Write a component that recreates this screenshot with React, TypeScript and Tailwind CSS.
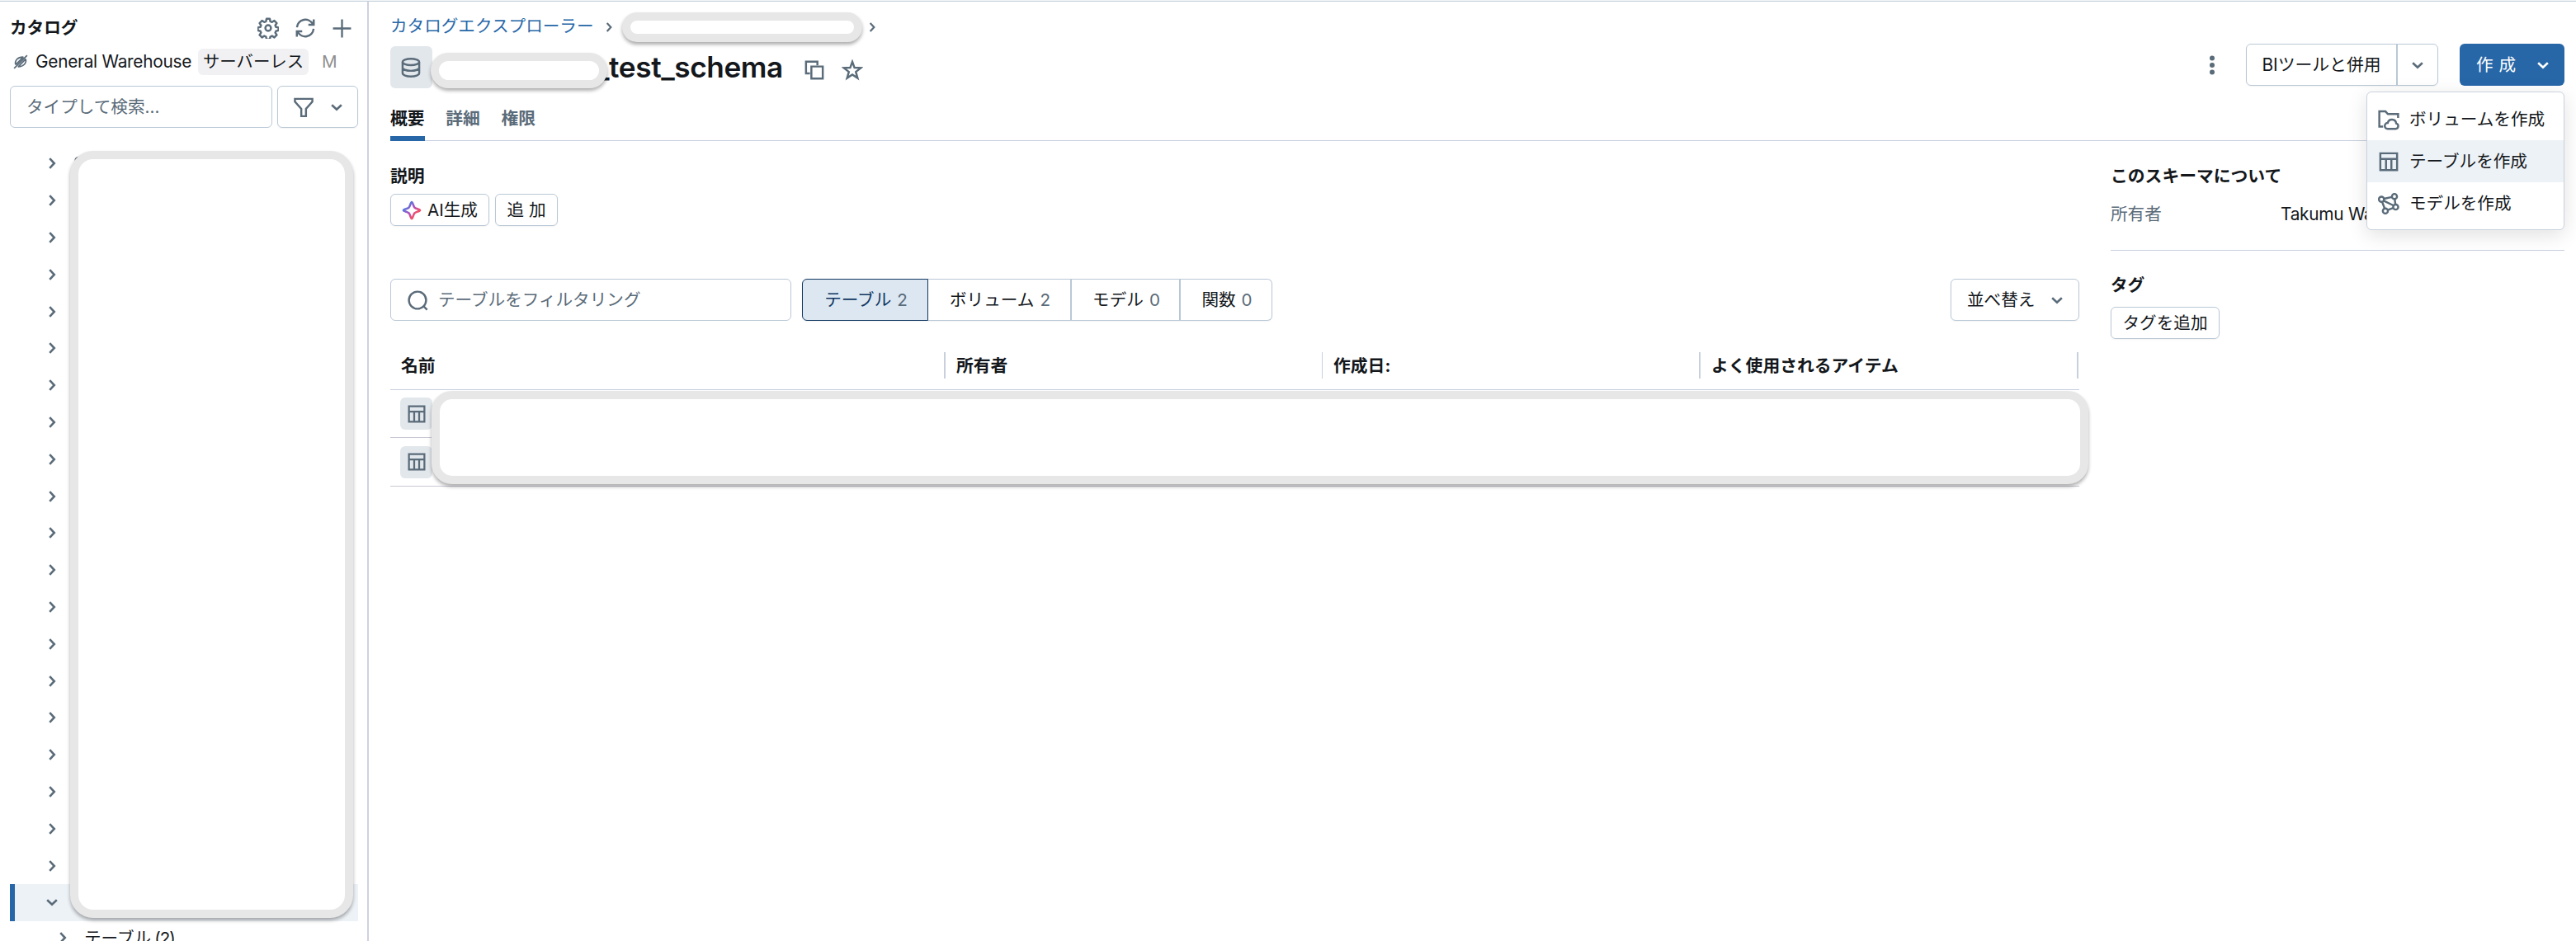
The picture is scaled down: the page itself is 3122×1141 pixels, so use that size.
import React from 'react';

type IconProps = { className?: string; size?: number };

function Svg({ size = 26, className = '', children }: IconProps & { children: React.ReactNode }) {
  return (
    <svg width={size} height={size} viewBox="0 0 16 16" fill="none" stroke="currentColor" strokeWidth="1.5" className={`block shrink-0 ${className}`}>
      {children}
    </svg>
  );
}

const ChevronDown = (p: IconProps) => <Svg {...p}><path strokeWidth="1.6" d="M4.4 6.3 8 9.7l3.6-3.4" /></Svg>;
const ChevronRight = (p: IconProps) => <Svg {...p}><path strokeWidth="1.6" d="M6.3 4.4 9.7 8l-3.4 3.6" /></Svg>;
const Plus = (p: IconProps) => <Svg {...p}><path d="M8 1v14M1 8h14" /></Svg>;
const Funnel = (p: IconProps) => <Svg {...p}><path d="M1.5 1.75h13v2.1L9.75 9.2v5.5h-3.5V9.2L1.5 3.85z" /></Svg>;
const Search = (p: IconProps) => <Svg {...p}><circle cx="8" cy="8" r="6.4" /><path d="m12.3 12.3 2.9 2.9" /></Svg>;
const Star = (p: IconProps) => <Svg {...p}><path d="m8 1.8 1.6 4.4 4.7.2-3.7 2.9 1.3 4.6L8 11.3l-3.9 2.6 1.3-4.6L1.7 6.4l4.7-.2z" /></Svg>;
const Copy = (p: IconProps) => <Svg {...p}><path d="M4.7 10.5H1.75v-8.8h8.5v2.8" /><path d="M5.75 5.3h8.5v9h-8.5z" /></Svg>;
const Database = (p: IconProps) => (
  <Svg {...p}><ellipse cx="8" cy="3.8" rx="6.2" ry="2.4" /><path d="M1.8 3.8v8.4c0 1.3 2.8 2.4 6.2 2.4s6.2-1.1 6.2-2.4V3.8M1.8 8c0 1.3 2.8 2.4 6.2 2.4s6.2-1.1 6.2-2.4" /></Svg>
);
const Table = (p: IconProps) => <Svg {...p}><path d="M1.75 1.75h12.5v12.5H1.75zM1.75 6h12.5M6 6v8.2M10 6v8.2" /></Svg>;
const Refresh = (p: IconProps) => (
  <Svg {...p}><path d="M1.8 7.4A6.3 6.3 0 0 1 13.6 5M14.2 8.6A6.3 6.3 0 0 1 2.4 11" /><path d="M14.3 1.5v4h-4M1.7 14.5v-4h4" /></Svg>
);
const Gear = (p: IconProps) => (
  <Svg {...p}>
    <circle cx="8" cy="8" r="2.1" />
    <path strokeLinejoin="round" d="M6.8 1.1h2.4l.4 1.9 1.3.6 1.7-1.1 1.8 1.8-1.1 1.7.5 1.2 1.9.4v2.2l-1.9.5-.5 1.2 1.1 1.7-1.8 1.8-1.7-1.1-1.3.6-.4 1.9H6.8l-.4-1.9-1.3-.6L3.4 15l-1.8-1.8 1.1-1.7-.5-1.2-1.9-.5V7.6l1.9-.4.5-1.2-1.1-1.7 1.8-1.8 1.7 1.1 1.3-.6z" />
  </Svg>
);
const Volume = (p: IconProps) => (
  <Svg {...p}><path d="M3.8 13.25H1V1.9h4.6l1.8 2H15v2.8" /><path d="M7.2 14.9h6a2.1 2.1 0 0 0 .4-4.1 3.2 3.2 0 0 0-6.3-.3 2.2 2.2 0 0 0-.1 4.4z" /></Svg>
);
const Model = (p: IconProps) => (
  <Svg {...p}>
    <circle cx="2.6" cy="4.7" r="1.9" /><circle cx="12.3" cy="2.6" r="1.9" /><circle cx="13.2" cy="10.5" r="1.9" /><circle cx="5.5" cy="13.4" r="1.9" />
    <path d="m4.5 4.3 5.9-1.3M4.2 5.8l7.5 3.6M3.1 6.6l1.9 4.9M12.5 4.5l.5 4.1M7.3 12.7l4.1-1.5" />
  </Svg>
);
const Unplugged = (p: IconProps) => (
  <Svg {...p}><path d="M1 15 15 1M2.6 11C1.3 7 4.5 2.6 11 2.8M13.4 5c1.3 4-1.9 8.400-8.400 8.200M5.500 13.200 13.400 5M2.600 11 11 2.800" /></Svg>
);
function Sparkle() {
  return (
    <svg width="26" height="26" viewBox="0 0 16 16" fill="none" className="block shrink-0">
      <defs>
        <linearGradient id="ai" x1="2" y1="3" x2="13" y2="13" gradientUnits="userSpaceOnUse">
          <stop offset="0.15" stopColor="#4a7fe0" />
          <stop offset="0.5" stopColor="#b04fc4" />
          <stop offset="0.8" stopColor="#f0506a" />
        </linearGradient>
      </defs>
      <path stroke="url(#ai)" strokeWidth="1.6" strokeLinejoin="round" d="M8 1.8c.8 0 1 2.9 2.1 4.1s4.1 1.3 4.1 2.1-3 .9-4.1 2.1-1.3 4.1-2.1 4.1-1-2.9-2.1-4.1S1.800 8.800 1.800 8s3-.9 4.100-2.100S7.200 1.800 8 1.800z" />
    </svg>
  );
}

// Covers private names; always sits over the content below it
function Redaction({ className }: { className: string }) {
  return <div className={`absolute z-10 border-[10px] border-[#e7e7e7] bg-white shadow-[0_3px_4px_rgba(0,0,0,0.32)] ${className}`} />;
}

const treeRows = Array.from({ length: 20 }, (_, i) => i);

function Sidebar() {
  return (
    <aside className="relative flex h-full w-[447px] shrink-0 flex-col border-r-2 border-[#cfd2e0] pl-3 pr-[11px]">
      <div className="mt-[13px] flex h-[38px] shrink-0 items-center">
        <h2 className="flex-1 font-bold">カタログ</h2>
        <div className="flex items-center gap-[19px] pr-[7px] text-[#5a6b79]">
          <Gear />
          <Refresh />
          <Plus size={25} />
        </div>
      </div>
      <div className="mt-1.5 flex h-8 shrink-0 items-center">
        <Unplugged size={18} className="ml-1 mr-[9px] text-[#5a6b79]" />
        <span className="w-[197px] whitespace-nowrap text-[20.8px] tracking-[-0.25px]">General Warehouse</span>
        <span className="flex h-8 w-[134px] items-center justify-center rounded-md bg-[#f1f1f4] text-[20.4px]">サーバーレス</span>
        <span className="ml-4 text-[#8f8f8f]">M</span>
      </div>
      <div className="mt-[13px] flex h-[51px] shrink-0 gap-1.5">
        <div className="flex w-[318px] items-center rounded-md border border-[#b9c8d6] pl-[19px] text-[#5a6b79]">タイプして検索...</div>
        <div className="flex flex-1 items-center justify-between rounded-md border border-[#b9c8d6] pl-[18px] pr-3 text-[#5a6b79] shadow-xs">
          <Funnel />
          <ChevronDown />
        </div>
      </div>
      <div className="mt-[21px] flex shrink-0 flex-col text-[#5a6b79]">
        {treeRows.map((row) => (
          <div key={row} className="flex h-[44.8px] items-center pl-[38px]">
            <ChevronRight />
            {row === 0 && <Database size={24} className="ml-[13px] mt-1" />}
          </div>
        ))}
        <div className="flex h-[44.8px] items-center border-l-[6px] border-[#2767a8] bg-[#edf2f7] pl-8">
          <ChevronDown />
        </div>
        <div className="flex h-[44.8px] items-center pl-[51px]">
          <ChevronRight className="-mt-1" />
          <span className="-mt-0.5 ml-[13px] text-[#14181c]">テーブル<span className="ml-1 tracking-[-1px]">(2)</span></span>
        </div>
      </div>
      <Redaction className="left-[85px] top-[181px] h-[930px] w-[343px] rounded-[28px]" />
    </aside>
  );
}

const menuItems = [
  { label: 'ボリュームを作成', Icon: Volume },
  { label: 'テーブルを作成', Icon: Table },
  { label: 'モデルを作成', Icon: Model },
];

function CreateMenu() {
  return (
    <div className="absolute right-0 top-[58px] z-20 flex h-[168px] w-[240px] flex-col rounded-md border border-[#c9d2de] bg-white pt-[7px] shadow-[0_6px_24px_rgba(0,0,0,0.12)]">
      {menuItems.map(({ label, Icon }, i) => (
        <div key={label} className={`flex h-[51px] items-center whitespace-nowrap pl-[13px] ${i === 1 ? 'bg-[#edf2f7]' : ''}`}>
          <Icon className="mr-3 text-[#5a6b79]" />
          {label}
        </div>
      ))}
    </div>
  );
}

function Header() {
  return (
    <header className="flex h-[169px] justify-between border-b border-[#c8d0de]">
      <div className="flex flex-col">
        <div className="relative flex h-[32px] items-center pt-[27px] text-[#2767a8]">
          カタログエクスプローラー
          <ChevronRight size={22} className="ml-[7px] mt-0.5 text-[#5a6b79]" />
          <ChevronRight size={22} className="ml-[297px] mt-0.5 text-[#5a6b79]" />
          <Redaction className="left-[281px] top-[13px] h-9 w-[291px] rounded-[18px]" />
        </div>
        <div className="relative mt-[22px] flex h-[51px] items-center">
          <div className="flex h-[51px] w-[51px] items-center justify-center rounded-md bg-[#e2e7ec] text-[#5a6b79]">
            <Database className="mr-0.5" />
          </div>
          <h1 className="-mt-px ml-[198px] text-[35.2px] font-semibold tracking-[-0.4px]">_test_schema</h1>
          <Copy className="ml-[25px] mt-1.5 text-[#5a6b79]" />
          <Star className="ml-5 mt-1.5 text-[#5a6b79]" />
          <Redaction className="left-[49px] top-2 h-[43px] w-[214px] rounded-[22px]" />
        </div>
        <nav className="mt-[19px] flex gap-[25.6px] text-[20.8px] font-bold text-[#5a6b79]">
          <span className="h-[45px] border-b-[6px] border-[#2767a8] pt-0.5 text-[#14181c]">概要</span>
          <span className="pt-0.5">詳細</span>
          <span className="pt-0.5">権限</span>
        </nav>
      </div>
      <div className="relative mt-[51px] flex h-[51px] items-center">
        <svg width="8" height="26" viewBox="0 0 8 26" fill="#5a6b79" className="mr-[37px]">
          <circle cx="4" cy="4.5" r="3" /><circle cx="4" cy="13" r="3" /><circle cx="4" cy="21.5" r="3" />
        </svg>
        <div className="flex h-[51px] w-[233px] rounded-md border border-[#b9c8d6] shadow-xs">
          <span className="flex w-[183px] items-center justify-center border-r-2 border-[#b9c8d6] text-[20.8px]">BIツールと併用</span>
          <span className="flex flex-1 items-center justify-center text-[#5a6b79]"><ChevronDown /></span>
        </div>
        <div className="ml-[26px] flex h-[51px] w-[127px] items-center rounded-md bg-[#2767a8] pl-5 text-white">
          <span className="flex gap-[7px]"><span>作</span><span>成</span></span>
          <ChevronDown className="ml-5" />
        </div>
        <CreateMenu />
      </div>
    </header>
  );
}

const segments = [
  { label: 'テーブル', count: 2, style: 'w-[153px] rounded-l-md border border-[#10365f] bg-[#dce7f2] text-[#10365f] pl-0.5' },
  { label: 'ボリューム', count: 2, style: 'w-[174px] border-y border-r-2 border-[#b9c8d6] pl-0.5' },
  { label: 'モデル', count: 0, style: 'w-[132px] border-y border-r-2 border-[#b9c8d6] pl-0.5' },
  { label: '関数', count: 0, style: 'w-[111px] rounded-r-md border-y border-r border-[#b9c8d6] pl-0.5' },
];

const columns = [
  { label: '名前', style: 'w-[673px] border-r-2' },
  { label: '所有者', style: 'w-[457px] border-r' },
  { label: '作成日:', style: 'w-[458px] border-r-2' },
  { label: 'よく使用されるアイテム', style: 'w-[458px] border-r-2' },
];

function Overview() {
  return (
    <section className="flex w-[2047px] flex-col">
      <h3 className="mt-[27px] text-[20.8px] font-bold">説明</h3>
      <div className="mt-[5px] flex h-[39px] gap-[7px]">
        <div className="flex w-[120px] items-center whitespace-nowrap rounded-md border border-[#b9c8d6] pl-3 shadow-xs">
          <Sparkle />
          <span className="ml-1.5">AI生成</span>
        </div>
        <div className="flex w-[76px] items-center justify-center gap-[6px] rounded-md border border-[#b9c8d6] shadow-xs">
          <span>追</span><span>加</span>
        </div>
      </div>
      <div className="mt-16 flex h-[51px]">
        <div className="flex w-[486px] items-center rounded-md border border-[#b9c8d6] pl-[19px] text-[#5a6b79]">
          <Search />
          <span className="ml-3">テーブルをフィルタリング</span>
        </div>
        <div className="ml-[13px] flex rounded-md shadow-xs">
          {segments.map((s) => (
            <div key={s.label} className={`flex items-center justify-center gap-[7px] whitespace-nowrap ${s.style}`}>
              {s.label}
              <span className="text-[#5a6b79]">{s.count}</span>
            </div>
          ))}
        </div>
        <div className="ml-auto flex w-[156px] items-center justify-between rounded-md border border-[#b9c8d6] pl-[19px] pr-[13px] shadow-xs">
          並べ替え
          <ChevronDown className="text-[#5a6b79]" />
        </div>
      </div>
      <div className="relative mt-[25px]">
        <div className="flex h-[59px] items-center border-b border-[#c8d0de]">
          {columns.map((c) => (
            <div key={c.label} className={`flex h-8 items-center border-[#c8d0de] pl-[13px] pt-px text-[20.8px] font-bold ${c.style}`}>{c.label}</div>
          ))}
        </div>
        {['h-[58px]', 'h-[59px]'].map((height) => (
          <div key={height} className={`flex items-center border-b border-[#c8c8d4] pl-3 ${height}`}>
            <div className="flex h-[39px] w-[39px] items-center justify-center rounded-md bg-[#e2e7ec] text-[#5a6b79]">
              <Table size={24} />
            </div>
          </div>
        ))}
        <Redaction className="left-[50px] top-[60px] h-[113px] w-[2008px] rounded-[25px]" />
      </div>
    </section>
  );
}

function SchemaInfo() {
  return (
    <aside className="ml-[38px] flex flex-1 flex-col">
      <h3 className="mt-[27px] text-[20.8px] font-bold">このスキーマについて</h3>
      <div className="mt-[14px] flex">
        <span className="w-[206px] text-[#5a6b79]">所有者</span>
        <span className="text-[20.8px] tracking-[-0.25px]">Takumu Wa</span>
      </div>
      <div className="mt-[27px] border-t border-[#c8d0de]" />
      <h3 className="mt-[26px] font-bold">タグ</h3>
      <div className="mt-[10px] flex h-[39px] w-[132px] items-center justify-center whitespace-nowrap rounded-md border border-[#b9c8d6] shadow-xs">タグを追加</div>
    </aside>
  );
}

export default function App() {
  return (
    <div className="flex h-[1141px] w-[3122px] flex-col overflow-hidden bg-white font-['Inter','Noto_Sans_CJK_JP',sans-serif] text-[20.6px] leading-[32px] text-[#14181c]">
      <div className="h-0.5 shrink-0 border-b border-[#c5d0da] bg-[#f3f6f8]" />
      <div className="flex min-h-0 flex-1">
        <Sidebar />
        <main className="flex flex-1 flex-col pl-[26px] pr-[14px]">
          <Header />
          <div className="flex">
            <Overview />
            <SchemaInfo />
          </div>
        </main>
      </div>
    </div>
  );
}
